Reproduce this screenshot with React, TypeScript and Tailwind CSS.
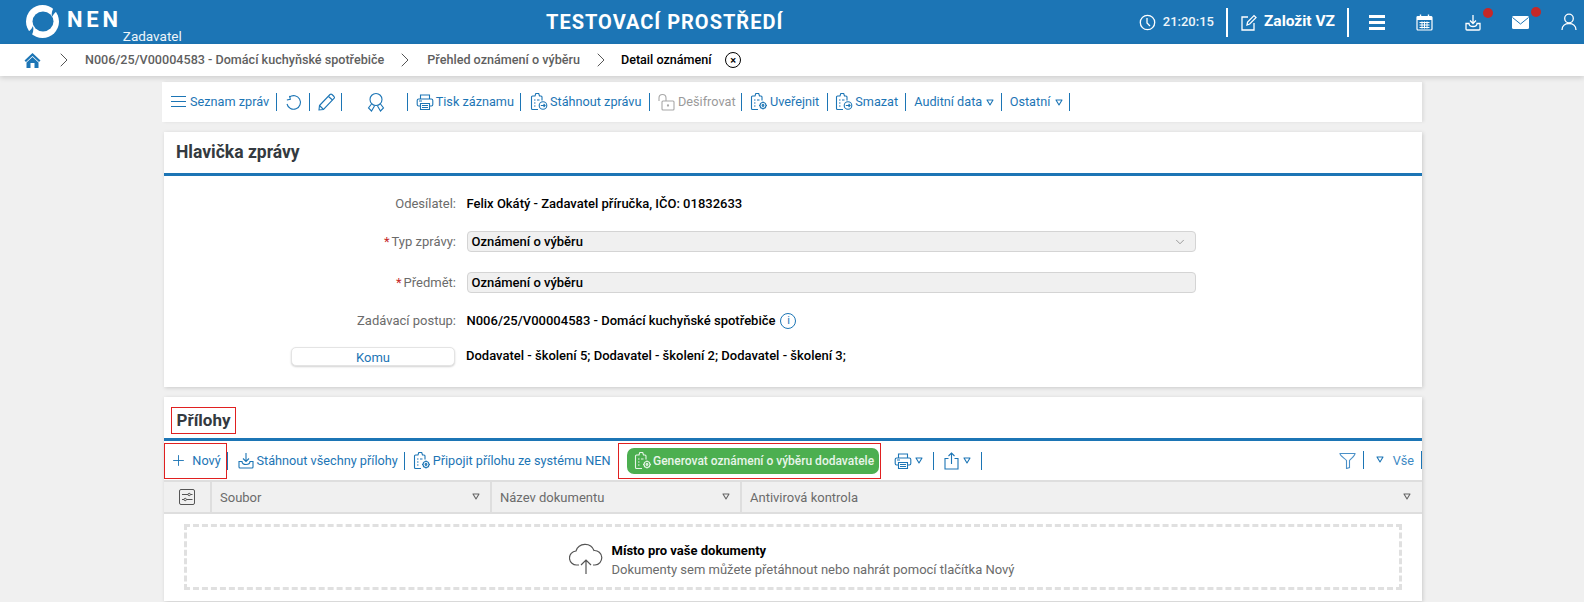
import type { ReactNode } from 'react'
import { ChevronDown, ChevronRight, Plus } from 'lucide-react'

const BLUE = '#1c75b5'

function Sep({ className = '' }: { className?: string }) {
  return <span className={`block w-px h-[18px] bg-[#1c75b5] shrink-0 ${className}`} />
}

function Caret({ color = BLUE, className = '' }: { color?: string; className?: string }) {
  return (
    <svg width="8" height="7" viewBox="0 0 8 7" fill="none" className={`shrink-0 ${className}`}>
      <path d="M1 1h6L4 6z" stroke={color} strokeWidth="1.1" strokeLinejoin="round" />
    </svg>
  )
}

// clipboard with a small badge in the corner, used for several toolbar actions
function ClipIcon({ color = BLUE, badge = 'gear' }: { color?: string; badge?: 'gear' | 'arrow' }) {
  return (
    <svg width="18" height="19" viewBox="0 0 18 19" fill="none" stroke={color} strokeWidth="1.1" className="shrink-0">
      <path d="M8 17.500H2.500a1 1 0 0 1-1-1V5a1 1 0 0 1 1-1H5l.8-2.500h2.900L9.500 4H11a1 1 0 0 1 1 1v3.500" />
      <path d="M4 8h1.500M4 11h1.500M4 14h1.500M7 8h2.500" />
      {badge === 'gear' ? (
        <>
          <circle cx="13" cy="13.500" r="3" />
          <circle cx="13" cy="13.500" r="0.900" />
          <path d="M13 9.500v1M13 16.500v1M9 13.500h1M16 13.500h1" />
        </>
      ) : (
        <>
          <circle cx="13" cy="13.500" r="3.800" />
          <path d="M10.800 13.500h4.200M13.600 12l1.500 1.500-1.500 1.500" />
        </>
      )}
    </svg>
  )
}

function PrinterIcon({ size = 18 }: { size?: number }) {
  return (
    <svg width={size} height={size} viewBox="0 0 18 18" fill="none" stroke={BLUE} strokeWidth="1.1" className="shrink-0">
      <path d="M4.500 6V2h9v4" />
      <rect x="1.200" y="6" width="15.600" height="7" rx="1.500" />
      <path d="M4.500 10.500h9V16.500h-9z" fill="#fff" />
      <path d="M6 12.500h6M6 14.500h6M3 8h3" />
    </svg>
  )
}

function ActionItem({ icon, children, muted, className = '' }: { icon: ReactNode; children: ReactNode; muted?: boolean; className?: string }) {
  return (
    <span className={`flex items-center gap-[2px] whitespace-nowrap ${muted ? 'text-[#9a9a9a]' : 'text-[#1c75b5]'} ${className}`}>
      {icon}
      {children}
    </span>
  )
}

function TopIcons() {
  return (
    <div className="flex items-center text-white">
      <svg width="17" height="17" viewBox="0 0 17 17" fill="none" stroke="#fff" strokeWidth="1.300">
        <circle cx="8.500" cy="8.500" r="7.200" />
        <path d="M8 4v5l3 3" />
      </svg>
      <span className="ml-[7px] text-[13px] font-medium text-[#eef5fa]">21:20:15</span>
      <span className="block w-[2px] h-[29px] bg-white ml-[12px]" />
      <svg width="17" height="17" viewBox="0 0 17 17" fill="none" stroke="#fff" strokeWidth="1.300" className="ml-[12px]">
        <path d="M8 3H2v13h12V9" />
        <path d="M7 11l.6-3L14 1.600l2 2L9.700 10z" />
      </svg>
      <span className="ml-[7px] text-[15.5px] font-bold whitespace-nowrap">Založit VZ</span>
      <span className="block w-[2px] h-[29px] bg-white ml-[12px]" />
      <span className="ml-[20px] flex flex-col gap-[3px] w-[16px]">
        <span className="block h-[3px] bg-white" />
        <span className="block h-[3px] bg-white" />
        <span className="block h-[3px] bg-white" />
      </span>
      <svg width="17" height="17" viewBox="0 0 17 17" className="ml-[31px]">
        <rect x="1" y="2.500" width="15" height="13.500" rx="1" fill="none" stroke="#fff" strokeWidth="1.200" />
        <rect x="1" y="2.500" width="15" height="3.500" fill="#fff" />
        <path d="M4.500 0.500v3M12.500 0.500v3" stroke="#fff" strokeWidth="1.400" />
        <path d="M3.500 8.500h10M3.500 11h10M3.500 13.500h10M6 7.500v7M8.500 7.500v7M11 7.500v7" stroke="#fff" strokeWidth="1" />
      </svg>
      <span className="relative ml-[32px] block w-[16px] h-[17px]">
        <svg width="16" height="17" viewBox="0 0 16 17" fill="none" stroke="#fff" strokeWidth="1.300">
          <path d="M8 1v8M5 6.500L8 9.500l3-3" />
          <path d="M4 9.500H1v5.500a1 1 0 0 0 1 1h12a1 1 0 0 0 1-1V9.500h-3c0 2-1.500 3-4 3s-4-1-4-3z" />
        </svg>
        <span className="absolute -top-[6px] left-[18px] w-[10px] h-[10px] rounded-full bg-[#c62828]" />
      </span>
      <span className="relative ml-[31px] block w-[17px] h-[13px]">
        <svg width="17" height="13" viewBox="0 0 17 13">
          <rect width="17" height="13" rx="1.500" fill="#fff" />
          <path d="M0.500 1.500L8.500 8l8-6.500" fill="none" stroke={BLUE} strokeWidth="1" />
        </svg>
        <span className="absolute -top-[9px] left-[19px] w-[10px] h-[10px] rounded-full bg-[#c62828]" />
      </span>
      <svg width="16" height="18" viewBox="0 0 16 18" fill="none" stroke="#fff" strokeWidth="1.300" className="ml-[32px]">
        <circle cx="8" cy="5.500" r="4.300" />
        <path d="M1 17c0-4 3-6.500 7-6.500s7 2.500 7 6.500" />
      </svg>
    </div>
  )
}

function FormRow({ label, required, children, className = '' }: { label: ReactNode; required?: boolean; children: ReactNode; className?: string }) {
  return (
    <div className={`flex items-center ${className}`}>
      <div className="w-[292px] shrink-0 text-right text-[13px] text-[#6b6b6b] whitespace-nowrap">
        {required && <span className="text-[#c62828] mr-[2px]">*</span>}
        {label}
      </div>
      <div className="ml-[10.5px] flex-1 min-w-0 text-[13px] font-medium text-black">{children}</div>
    </div>
  )
}

export default function App() {
  return (
    <div className="h-[602px] overflow-hidden bg-[#f0f0f0] font-['Roboto',sans-serif]">
      {/* Top bar */}
      <header className="h-[44px] bg-[#1c75b5] flex items-center relative">
        <div className="flex items-center pl-[26px] w-[546px] shrink-0">
          <svg width="33" height="33" viewBox="0 0 33 33" className="shrink-0 -mt-[2px]">
            <circle cx="16.500" cy="16.500" r="16.500" fill="#fff" />
            <ellipse cx="17" cy="16.500" rx="10.500" ry="10" fill="#1c75b5" />
            <path d="M7 21C5 25 3 27 0 27l4 6c3-4 4-8 3-12z" fill="#1c75b5" />
            <path d="M26 12c2-4 4-6 7-6l-3-6c-3 3-5 7-4 12z" fill="#1c75b5" />
          </svg>
          <div className="ml-[8px] flex items-end h-[44px]">
            <span className="text-[22px] font-bold text-white tracking-[3.8px] leading-[40px] h-[44px]">NEN</span>
            <span className="text-[13.5px] text-[#eef5fa] leading-none ml-[1px] mb-[1px]">Zadavatel</span>
          </div>
        </div>
        <div className="text-[20px] font-bold tracking-[1px] text-white whitespace-nowrap">TESTOVACÍ PROSTŘEDÍ</div>
        <div className="ml-auto pr-[7px]">
          <TopIcons />
        </div>
      </header>

      {/* Breadcrumb */}
      <nav className="h-[32px] bg-white flex items-center pl-[24px] shadow-[0_2px_5px_rgba(0,0,0,0.14)] relative text-[12.6px] font-medium">
        <svg width="17" height="17" viewBox="0 0 17 17" className="shrink-0">
          <path d="M8.500 1L0.500 8.500 2 10l6.500-6 6.500 6 1.500-1.500z" fill={BLUE} />
          <path d="M2.500 10.500L8.500 5l6 5.500V16H10.500v-5h-4v5h-4z" fill={BLUE} />
        </svg>
        <ChevronRight size={24} strokeWidth={1} className="ml-[11px] text-[#555] shrink-0" />
        <span className="ml-[9px] text-[#5f5f5f]">N006/25/V00004583 - Domácí kuchyňské spotřebiče</span>
        <ChevronRight size={24} strokeWidth={1} className="ml-[9px] text-[#555] shrink-0" />
        <span className="ml-[10px] text-[#5f5f5f]">Přehled oznámení o výběru</span>
        <ChevronRight size={24} strokeWidth={1} className="ml-[9px] text-[#555] shrink-0" />
        <span className="ml-[8px] text-black">Detail oznámení</span>
        <span className="ml-[13.5px] w-[16px] h-[16px] rounded-full border border-black flex items-center justify-center text-[11px] leading-none text-black">×</span>
      </nav>

      <main className="pl-[162px] w-[1422px]">
        {/* Message toolbar */}
        <div className="mt-[6px] h-[40px] bg-white flex items-center text-[12.7px] shadow-[2px_0_3px_rgba(0,0,0,0.08)] pl-[9px]">
          <ActionItem
            icon={
              <span className="flex flex-col gap-[4px] w-[15px] mr-[2px]">
                <span className="block h-px bg-[#1c75b5]" />
                <span className="block h-px bg-[#1c75b5]" />
                <span className="block h-px bg-[#1c75b5]" />
              </span>
            }
          >
            Seznam zpráv
          </ActionItem>
          <Sep className="ml-[7px]" />
          <svg width="17" height="17" viewBox="0 0 17 17" fill="none" stroke={BLUE} strokeWidth="1.100" className="ml-[8px] shrink-0">
            <path d="M4.500 3A6.800 6.800 0 1 1 2 10" />
            <path d="M1.500 5.500h3.500V2" transform="rotate(-12 4 4)" />
          </svg>
          <Sep className="ml-[7px]" />
          <svg width="18" height="18" viewBox="0 0 18 18" fill="none" stroke={BLUE} strokeWidth="1.100" className="ml-[7.500px] shrink-0">
            <path d="M1.500 12.500L12 1.500a1.500 1.500 0 0 1 2 0l2 2a1.500 1.500 0 0 1 0 2L5.500 16.500 1 17z" />
            <path d="M10.500 3.500l4 3.500M1.500 12.500l4 4" />
          </svg>
          <Sep className="ml-[5px]" />
          <svg width="20" height="20" viewBox="0 0 20 20" fill="none" stroke={BLUE} strokeWidth="1.100" className="ml-[24.500px] shrink-0">
            <circle cx="10" cy="7.500" r="6" />
            <path d="M5.500 12l-3 4 3 3 3-5M14.500 12l3 4-3 3-3-5" />
          </svg>
          <Sep className="ml-[20.500px]" />
          <ActionItem className="ml-[8px]" icon={<PrinterIcon />}>Tisk záznamu</ActionItem>
          <Sep className="ml-[6px]" />
          <ActionItem className="ml-[9px]" icon={<ClipIcon badge="arrow" />}>Stáhnout zprávu</ActionItem>
          <Sep className="ml-[7px]" />
          <ActionItem
            muted
            className="ml-[8.500px]"
            icon={
              <svg width="17" height="18" viewBox="0 0 17 18" fill="none" stroke="#a8a8a8" strokeWidth="1.100" className="shrink-0 mr-[1px]">
                <path d="M1 8V5a3.500 3.500 0 0 1 7 0v3" />
                <rect x="4" y="8" width="12" height="9" rx="1" />
                <circle cx="10" cy="12.500" r="0.600" />
              </svg>
            }
          >
            Dešifrovat
          </ActionItem>
          <Sep className="ml-[5px]" />
          <ActionItem className="ml-[8.500px]" icon={<ClipIcon />}>Uveřejnit</ActionItem>
          <Sep className="ml-[7.500px]" />
          <ActionItem className="ml-[7.500px]" icon={<ClipIcon badge="arrow" />}>Smazat</ActionItem>
          <Sep className="ml-[6.500px]" />
          <span className="ml-[8.500px] text-[#1c75b5] whitespace-nowrap">Auditní data</span>
          <Caret className="ml-[4px]" />
          <Sep className="ml-[7px]" />
          <span className="ml-[7.500px] text-[#1c75b5]">Ostatní</span>
          <Caret className="ml-[4.500px]" />
          <Sep className="ml-[6px]" />
        </div>

        {/* Message header */}
        <section className="mt-[10px] ml-[2px] h-[255px] bg-white shadow-[1px_1px_4px_rgba(0,0,0,0.16)]">
          <h2 className="h-[41px] pl-[12px] flex items-center text-[17.5px] font-bold text-[#343a40]">Hlavička zprávy</h2>
          <div className="h-[3px] bg-[#1c75b5]" />
          <div className="pt-[18px] pr-[226px]">
            <FormRow label="Odesílatel:" className="h-[20px]">Felix Okátý - Zadavatel příručka, IČO: 01832633</FormRow>
            <FormRow label="Typ zprávy:" required className="mt-[17px] h-[21px]">
              <div className="h-[21px] rounded-[4px] border border-[#d4d4d4] bg-[#f0f0f0] pl-[4px] pr-[8px] flex items-center justify-between">
                <span>Oznámení o výběru</span>
                <ChevronDown size={14} strokeWidth={1.200} className="text-[#777]" />
              </div>
            </FormRow>
            <FormRow label="Předmět:" required className="mt-[20px] h-[21px]">
              <div className="h-[21px] rounded-[4px] border border-[#d4d4d4] bg-[#f0f0f0] pl-[4px] flex items-center">Oznámení o výběru</div>
            </FormRow>
            <FormRow label="Zadávací postup:" className="mt-[18px] h-[20px]">
              <div className="flex items-center">
                N006/25/V00004583 - Domácí kuchyňské spotřebiče
                <span className="ml-[5px] w-[16px] h-[16px] rounded-full border border-[#1c75b5] text-[#1c75b5] text-[11px] flex items-center justify-center font-normal">i</span>
              </div>
            </FormRow>
            <div className="mt-[15px] flex items-center h-[20px]">
              <button className="ml-[127px] w-[164px] h-[19px] rounded-[5px] bg-white border border-[#e4e4e4] shadow-[0_1px_2px_rgba(0,0,0,0.18)] text-[13px] text-[#1c75b5]">Komu</button>
              <span className="ml-[11px] text-[13px] font-medium text-black">Dodavatel - školení 5; Dodavatel - školení 2; Dodavatel - školení 3;</span>
            </div>
          </div>
        </section>

        {/* Attachments */}
        <section className="mt-[10px] ml-[2px] h-[204px] bg-white shadow-[1px_1px_4px_rgba(0,0,0,0.16)]">
          <div className="h-[41px] pl-[7px] pt-[10px]">
            <h2 className="w-[65px] h-[27px] border border-[#e02020] flex items-center justify-center text-[17px] font-bold text-[#343a40]">Přílohy</h2>
          </div>
          <div className="h-[3px] bg-[#1c75b5]" />
          <div className="h-[39px] flex items-center text-[12.7px] text-[#1c75b5]">
            <span className="w-[63px] h-[36px] border border-[#e02020] flex items-center justify-center gap-[5px] shrink-0">
              <Plus size={17} strokeWidth={1.300} />
              Nový
            </span>
            <Sep />
            <ActionItem className="ml-[9.500px] gap-[3px]" icon={
              <svg width="16" height="17" viewBox="0 0 16 17" fill="none" stroke={BLUE} strokeWidth="1.100" className="shrink-0">
                <path d="M8 1v8M5 6.500L8 9.500l3-3" />
                <path d="M4 9.500H1v5.500a1 1 0 0 0 1 1h12a1 1 0 0 0 1-1V9.500h-3c0 2-1.500 3-4 3s-4-1-4-3z" />
              </svg>
            }>Stáhnout všechny přílohy</ActionItem>
            <Sep className="ml-[6px]" />
            <ActionItem className="ml-[8px]" icon={<ClipIcon />}>Připojit přílohu ze systému NEN</ActionItem>
            <span className="ml-[7.500px] w-[263px] h-[36px] border border-[#e02020] flex items-center pl-[8px] shrink-0">
              <span className="w-[252px] h-[26px] rounded-[7px] bg-[#4caf50] text-[#e8f5e9] text-[12px] font-medium flex items-center pl-[7px] gap-[1px] whitespace-nowrap">
                <ClipIcon color="#e8f5e9" />
                Generovat oznámení o výběru dodavatele
              </span>
            </span>
            <span className="ml-[13px]"><PrinterIcon /></span>
            <Caret className="ml-[3px]" />
            <Sep className="ml-[10px]" />
            <svg width="15" height="18" viewBox="0 0 15 18" fill="none" stroke={BLUE} strokeWidth="1.100" className="ml-[10px] shrink-0">
              <path d="M4.500 6.500H1v10.500h13V6.500h-3.500" />
              <path d="M7.500 12V1M4.500 4l3-3 3 3" />
            </svg>
            <Caret className="ml-[4px]" />
            <Sep className="ml-[10px]" />
            <div className="ml-auto flex items-center">
              <svg width="17" height="17" viewBox="0 0 17 17" fill="none" stroke="#4a90c8" strokeWidth="1.100" className="shrink-0">
                <path d="M1 1.500h15c0 2.500-4 5-5.500 7v7l-3 1v-8C6 6.500 1 4 1 1.500z" />
              </svg>
              <Sep className="ml-[7px]" />
              <Caret className="ml-[12px] -mt-[2px]" />
              <span className="ml-[9px] text-[#3d8ac4]">Vše</span>
              <Sep className="ml-[7px]" />
            </div>
          </div>

          <div className="h-[34px] bg-[#f0f0f0] border-y-2 border-[#dedede] flex items-stretch text-[13px] text-[#6b6b6b]">
            <div className="w-[48px] border-r-2 border-[#dedede] flex items-center justify-center">
              <svg width="16" height="16" viewBox="0 0 16 16" fill="none" stroke="#555" strokeWidth="1">
                <rect x="0.500" y="0.500" width="15" height="15" rx="1.500" />
                <path d="M3 5.500h6M11.500 5.500h2M3 10.500h2M7.500 10.500h6" />
                <circle cx="10.200" cy="5.500" r="1.200" />
                <circle cx="6.200" cy="10.500" r="1.200" />
              </svg>
            </div>
            <div className="w-[280px] border-r-2 border-[#dedede] flex items-center justify-between pl-[8px] pr-[10px]">
              <span className="mt-[2px]">Soubor</span>
              <Caret color="#666" className="-mt-[1px]" />
            </div>
            <div className="w-[250px] border-r-2 border-[#dedede] flex items-center justify-between pl-[8px] pr-[10px]">
              <span className="mt-[2px]">Název dokumentu</span>
              <Caret color="#666" className="-mt-[1px]" />
            </div>
            <div className="flex-1 flex items-center justify-between pl-[8px] pr-[11px]">
              <span className="mt-[2px]">Antivirová kontrola</span>
              <Caret color="#666" className="-mt-[1px]" />
            </div>
          </div>

          <div className="pt-[10px] pl-[20px] pr-[20px]">
            <div className="h-[66px] pt-[5px] border-[3px] border-dashed border-[#e0e0e0] flex items-center justify-center">
              <svg width="34" height="34" viewBox="0 0 34 34" fill="none" stroke="#555" strokeWidth="1.200" className="shrink-0 -ml-[3px] -mt-[4px]">
                <path d="M10 24H8a7 7 0 0 1-1-14A9.500 9.500 0 0 1 25 9.500 7 7 0 0 1 26 24h-2" />
                <path d="M17 33V19M12 24l5-5 5 5" />
              </svg>
              <div className="ml-[9px] text-[13px]">
                <div className="font-bold text-black leading-[19px]">Místo pro vaše dokumenty</div>
                <div className="text-[#6b6b6b] leading-[19px]">Dokumenty sem můžete přetáhnout nebo nahrát pomocí tlačítka Nový</div>
              </div>
            </div>
          </div>
        </section>
      </main>
    </div>
  )
}
